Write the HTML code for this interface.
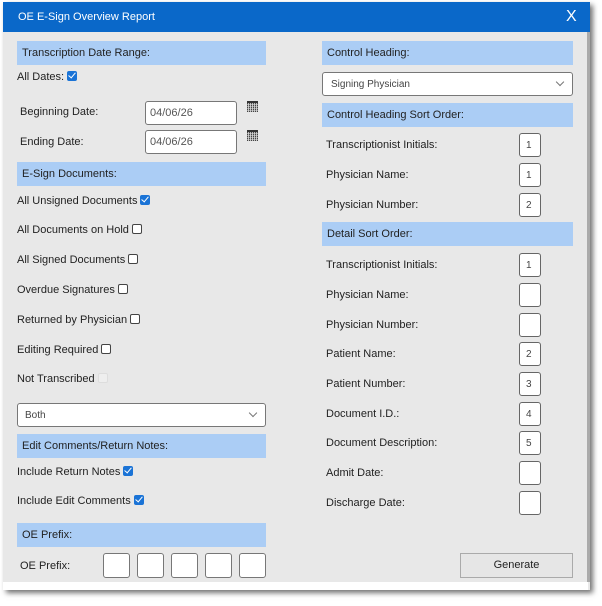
<!DOCTYPE html>
<html><head><meta charset="utf-8"><style>
*{box-sizing:border-box;margin:0;padding:0}
body{width:602px;height:606px;background:#fff;position:relative;overflow:hidden;font-family:"Liberation Sans",Arial,sans-serif;font-size:11px;color:#222}
.dlg{position:absolute;left:3px;top:2px;width:587px;height:588px;background:#e8e8e8;box-shadow:3px 3px 5px rgba(0,0,0,.55)}
.hdr{position:absolute;left:3px;top:2px;width:587px;height:30px;background:#0a68c9;color:#fff}
.a{position:absolute;white-space:nowrap}
.sec{position:absolute;height:24px;background:#abcdf5;padding-left:5px;line-height:24px;font-size:11px;color:#222}
.inp{position:absolute;background:#fff;border:1px solid #777;border-radius:3px}
.sb{position:absolute;width:22px;height:24px;background:#fff;border:1px solid #666;border-radius:3px;font-size:10px;color:#444;padding-left:6px;line-height:23px}
.cb{display:inline-block;width:10px;height:10px;border:1px solid #444;border-radius:2px;background:#fff;vertical-align:-1px;margin-left:3px}
.ck{display:inline-block;width:10px;height:10px;border-radius:2px;background:#1a73d6;vertical-align:-1px;margin-left:3px;position:relative}
.ck:after{content:"";position:absolute;left:3px;top:0px;width:3px;height:6px;border:solid #fff;border-width:0 1.5px 1.5px 0;transform:rotate(40deg)}
.chev{position:absolute;width:6px;height:6px;border:solid #777;border-width:0 1px 1px 0;transform:rotate(45deg)}
.cal{position:absolute;width:11px;height:11px;border-top:2px solid #333;background:repeating-linear-gradient(90deg,transparent 0 1px,rgba(220,220,220,.8) 1px 2px),repeating-linear-gradient(0deg,#444 0 1px,#999 1px 2px)}
</style></head><body>
<div class="dlg"></div>
<div style="position:absolute;left:3px;top:582px;width:585px;height:8px;background:#fff"></div>
<div style="position:absolute;left:587px;top:32px;width:3px;height:550px;background:#aaa"></div>
<div class="hdr"><span class="a" style="left:15px;top:9px;font-size:11px">OE E-Sign Overview Report</span><span class="a" style="left:563px;top:6px;font-size:16px">X</span></div>

<div class="sec" style="left:17px;top:41px;width:249px">Transcription Date Range:</div>
<div class="a" style="left:17px;top:71px">All Dates:<span class="ck"></span></div>
<div class="a" style="left:20px;top:106px">Beginning Date:</div>
<div class="inp" style="left:145px;top:101px;width:92px;height:24px;padding-left:4px;line-height:23px;color:#555">04/06/26</div>
<div class="cal" style="left:247px;top:101px"></div>
<div class="a" style="left:20px;top:136px">Ending Date:</div>
<div class="inp" style="left:145px;top:130px;width:92px;height:24px;padding-left:4px;line-height:23px;color:#555">04/06/26</div>
<div class="cal" style="left:247px;top:130px"></div>

<div class="sec" style="left:17px;top:162px;width:249px">E-Sign Documents:</div>
<div class="a" style="left:17px;top:195px">All Unsigned Documents<span class="ck"></span></div>
<div class="a" style="left:17px;top:224px">All Documents on Hold<span class="cb"></span></div>
<div class="a" style="left:17px;top:254px">All Signed Documents<span class="cb"></span></div>
<div class="a" style="left:17px;top:284px">Overdue Signatures<span class="cb"></span></div>
<div class="a" style="left:17px;top:314px">Returned by Physician<span class="cb"></span></div>
<div class="a" style="left:17px;top:344px">Editing Required<span class="cb"></span></div>
<div class="a" style="left:17px;top:373px">Not Transcribed<span class="cb" style="border-color:#ddd;background:#eee"></span></div>
<div class="inp" style="left:17px;top:403px;width:249px;height:24px;padding-left:7px;line-height:23px;font-size:10px;color:#444">Both</div>
<div class="chev" style="left:250px;top:410px"></div>

<div class="sec" style="left:17px;top:434px;width:249px">Edit Comments/Return Notes:</div>
<div class="a" style="left:17px;top:466px">Include Return Notes<span class="ck"></span></div>
<div class="a" style="left:17px;top:495px">Include Edit Comments<span class="ck"></span></div>

<div class="sec" style="left:17px;top:523px;width:249px">OE Prefix:</div>
<div class="a" style="left:20px;top:560px">OE Prefix:</div>
<div class="inp" style="left:103px;top:553px;width:27px;height:25px"></div>
<div class="inp" style="left:137px;top:553px;width:27px;height:25px"></div>
<div class="inp" style="left:171px;top:553px;width:27px;height:25px"></div>
<div class="inp" style="left:205px;top:553px;width:27px;height:25px"></div>
<div class="inp" style="left:239px;top:553px;width:27px;height:25px"></div>

<div class="sec" style="left:322px;top:41px;width:251px">Control Heading:</div>
<div class="inp" style="left:322px;top:72px;width:251px;height:24px;padding-left:8px;line-height:23px;font-size:10px;color:#444">Signing Physician</div>
<div class="chev" style="left:557px;top:79px"></div>
<div class="sec" style="left:322px;top:103px;width:251px">Control Heading Sort Order:</div>
<div class="a" style="left:326px;top:139px">Transcriptionist Initials:</div><div class="sb" style="left:519px;top:133px">1</div>
<div class="a" style="left:326px;top:169px">Physician Name:</div><div class="sb" style="left:519px;top:163px">1</div>
<div class="a" style="left:326px;top:199px">Physician Number:</div><div class="sb" style="left:519px;top:193px">2</div>
<div class="sec" style="left:322px;top:222px;width:251px">Detail Sort Order:</div>
<div class="a" style="left:326px;top:259px">Transcriptionist Initials:</div><div class="sb" style="left:519px;top:253px">1</div>
<div class="a" style="left:326px;top:289px">Physician Name:</div><div class="sb" style="left:519px;top:283px"></div>
<div class="a" style="left:326px;top:319px">Physician Number:</div><div class="sb" style="left:519px;top:313px"></div>
<div class="a" style="left:326px;top:348px">Patient Name:</div><div class="sb" style="left:519px;top:342px">2</div>
<div class="a" style="left:326px;top:378px">Patient Number:</div><div class="sb" style="left:519px;top:372px">3</div>
<div class="a" style="left:326px;top:408px">Document I.D.:</div><div class="sb" style="left:519px;top:402px">4</div>
<div class="a" style="left:326px;top:437px">Document Description:</div><div class="sb" style="left:519px;top:431px">5</div>
<div class="a" style="left:326px;top:467px">Admit Date:</div><div class="sb" style="left:519px;top:461px"></div>
<div class="a" style="left:326px;top:497px">Discharge Date:</div><div class="sb" style="left:519px;top:491px"></div>

<div style="position:absolute;left:460px;top:553px;width:113px;height:25px;background:#e6e6e6;border:1px solid #aaa;text-align:center;line-height:23px">Generate</div>
</body></html>
